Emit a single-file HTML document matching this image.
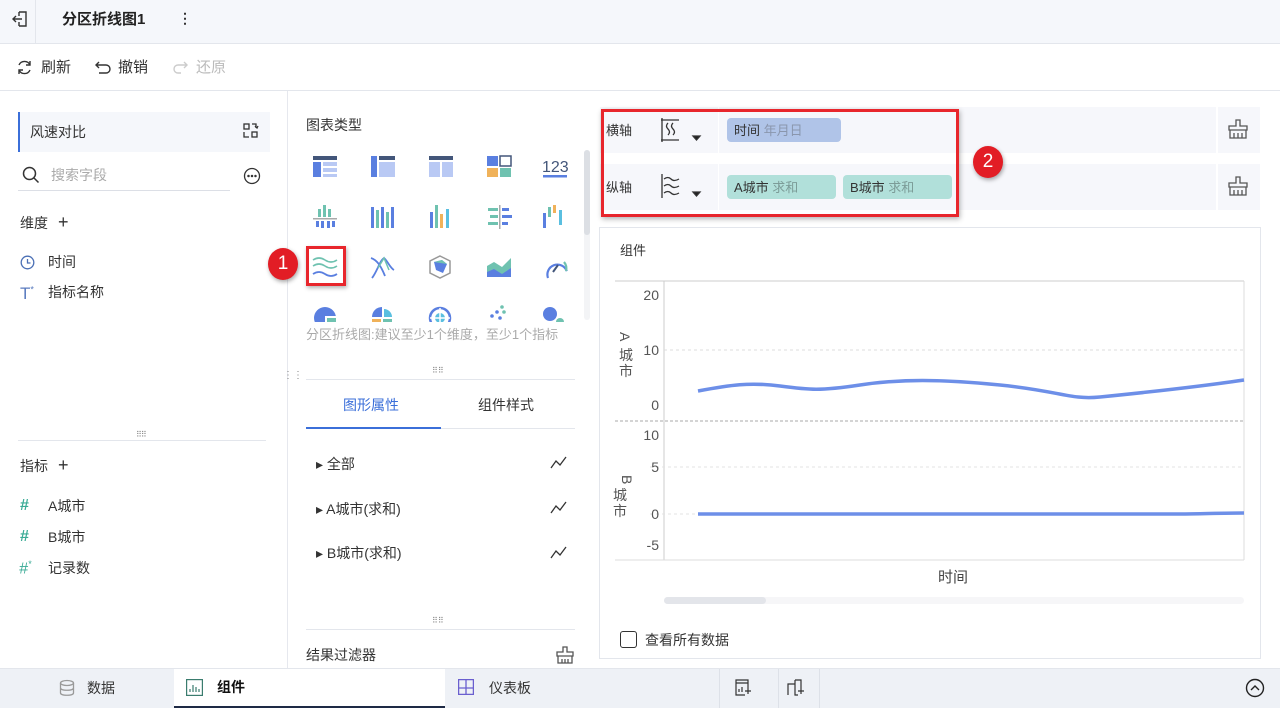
<!DOCTYPE html>
<html><head><meta charset="utf-8"><style>
*{box-sizing:border-box;margin:0;padding:0}
body{width:1280px;height:708px;overflow:hidden;position:relative;background:#fff;font-family:"Liberation Sans","Noto Sans CJK SC",sans-serif;font-size:14px;color:#333}
.a{position:absolute}
.t{position:absolute;white-space:nowrap;line-height:1}
</style></head><body>
<!-- top bar -->
<div class="a" style="left:0;top:0;width:1280px;height:44px;background:#f5f7fb;border-bottom:1px solid #e3e6ec"></div>
<div class="a" style="left:35px;top:0;width:1px;height:44px;background:#e3e6ec"></div>
<svg class="a" style="left:11px;top:10px" width="18" height="18" viewBox="0 0 18 18" fill="none" stroke="#333" stroke-width="1.4"><path d="M8 2h7v14H8M8 6v-4M8 16v-4M2 9h9M5 6L2 9l3 3"/></svg>
<div class="t" style="left:62px;top:12px;font-size:15px;font-weight:bold;color:#222">分区折线图1</div>
<div class="t" style="left:178px;top:11px;font-size:14px;font-weight:bold">⋮</div>
<!-- toolbar -->
<div class="a" style="left:0;top:90px;width:1280px;height:1px;background:#e3e6ec"></div>
<svg class="a" style="left:16px;top:59px" width="17" height="17" viewBox="0 0 17 17" fill="none" stroke="#333" stroke-width="1.4"><path d="M14 6A6 6 0 0 0 3 6M3 11a6 6 0 0 0 11 0M14 2v4h-4M3 15v-4h4"/></svg>
<div class="t" style="left:41px;top:60px;font-size:15px">刷新</div>
<svg class="a" style="left:95px;top:59px" width="17" height="17" viewBox="0 0 17 17" fill="none" stroke="#333" stroke-width="1.4"><path d="M4 3L1 6l3 3M1 6h10a4 4 0 0 1 0 8H4"/></svg>
<div class="t" style="left:118px;top:60px;font-size:15px">撤销</div>
<svg class="a" style="left:172px;top:59px" width="17" height="17" viewBox="0 0 17 17" fill="none" stroke="#ccc" stroke-width="1.4"><path d="M12 3l3 3-3 3M15 6H6a4 4 0 0 0 0 8h3"/></svg>
<div class="t" style="left:196px;top:60px;font-size:15px;color:#bbb">还原</div>
<!-- left panel -->
<div class="a" style="left:287px;top:91px;width:1px;height:577px;background:#e6e8ee"></div>
<div class="a" style="left:18px;top:112px;width:252px;height:40px;background:#f5f7fb;border-left:2px solid #3b6fd9"></div>
<div class="t" style="left:30px;top:125px">风速对比</div>
<svg class="a" style="left:243px;top:123px" width="16" height="16" viewBox="0 0 16 16" fill="none" stroke="#333" stroke-width="1.3"><rect x="1" y="1" width="5" height="5"/><rect x="9" y="9" width="5" height="5"/><path d="M1 9v5h5M9 1h4v4M12 3l2 2 1-2"/></svg>
<svg class="a" style="left:22px;top:166px" width="18" height="18" viewBox="0 0 18 18" fill="none" stroke="#333" stroke-width="1.5"><circle cx="7.5" cy="7.5" r="6"/><path d="M12 12l4.5 4.5"/></svg>
<div class="t" style="left:51px;top:168px;color:#aaa">搜索字段</div>
<div class="a" style="left:18px;top:190px;width:212px;height:1px;background:#dcdfe6"></div>
<svg class="a" style="left:243px;top:167px" width="18" height="18" viewBox="0 0 18 18" fill="none" stroke="#333" stroke-width="1.3"><circle cx="9" cy="9" r="7.5"/><circle cx="5.5" cy="9" r=".6" fill="#333"/><circle cx="9" cy="9" r=".6" fill="#333"/><circle cx="12.5" cy="9" r=".6" fill="#333"/></svg>
<div class="t" style="left:20px;top:216px">维度</div>
<div class="t" style="left:58px;top:213px;font-size:18px">+</div>
<svg class="a" style="left:20px;top:255px" width="15" height="15" viewBox="0 0 15 15" fill="none" stroke="#4a6fb5" stroke-width="1.3"><circle cx="7.5" cy="7.5" r="6.3"/><path d="M7.5 4v4h3"/></svg>
<div class="t" style="left:48px;top:255px">时间</div>
<div class="t" style="left:20px;top:285px;color:#5a7bbf;font-size:17px">T<sup style="font-size:9px">*</sup></div>
<div class="t" style="left:48px;top:285px">指标名称</div>
<div class="a" style="left:18px;top:440px;width:248px;height:1px;background:#e3e6ec"></div>
<div class="t" style="left:136px;top:431px;font-size:8px;color:#888;letter-spacing:-1px">⠿⠿</div>
<div class="t" style="left:20px;top:459px">指标</div>
<div class="t" style="left:58px;top:456px;font-size:18px">+</div>
<div class="t" style="left:20px;top:498px;color:#3aab96;font-weight:bold;font-size:16px">#</div>
<div class="t" style="left:48px;top:499px">A城市</div>
<div class="t" style="left:20px;top:529px;color:#3aab96;font-weight:bold;font-size:16px">#</div>
<div class="t" style="left:48px;top:530px">B城市</div>
<div class="t" style="left:19px;top:560px;color:#3aab96;font-style:italic;font-size:16px">#<sup style="font-size:9px">*</sup></div>
<div class="t" style="left:48px;top:561px">记录数</div>
<div class="t" style="left:283px;top:371px;font-size:10px;color:#888">⋮⋮</div>
<!-- middle panel -->
<div class="t" style="left:306px;top:118px">图表类型</div>
<div class="a" style="left:584px;top:150px;width:6px;height:170px;background:#f3f4f6;border-radius:3px"></div>
<div class="a" style="left:584px;top:150px;width:6px;height:85px;background:#dcdfe4;border-radius:3px"></div>
<svg class="a" style="left:300px;top:150px" width="280" height="180" viewBox="300 150 280 180">
<rect x="313" y="156" width="24" height="4" fill="#43567a"/><rect x="313" y="162" width="8" height="15" fill="#5a7fe0"/><rect x="323" y="162" width="14" height="4" fill="#b9c9f4"/><rect x="323" y="168" width="14" height="4" fill="#b9c9f4"/><rect x="323" y="174" width="14" height="3" fill="#b9c9f4"/>
<rect x="371" y="156" width="6" height="21" fill="#5a7fe0"/><rect x="379" y="156" width="16" height="4" fill="#43567a"/><rect x="379" y="162" width="16" height="15" fill="#b9c9f4"/>
<rect x="429" y="156" width="24" height="4" fill="#43567a"/><rect x="429" y="162" width="11" height="15" fill="#b9c9f4"/><rect x="442" y="162" width="11" height="15" fill="#b9c9f4"/>
<rect x="487" y="156" width="11" height="10" fill="#5a7fe0"/><rect x="500" y="156" width="11" height="10" fill="none" stroke="#43567a" stroke-width="1.5"/><rect x="487" y="168" width="11" height="9" fill="#f0b25a"/><rect x="500" y="168" width="11" height="9" fill="#6fc2b0"/>
<text x="542" y="172" font-size="16" fill="#43567a" font-family="Liberation Sans">123</text><rect x="543" y="175" width="24" height="2.5" fill="#5a7fe0"/>
<rect x="318" y="209" width="3" height="8" fill="#6fc2b0"/><rect x="323" y="205" width="3" height="12" fill="#6fc2b0"/><rect x="328" y="209" width="3" height="8" fill="#6fc2b0"/><rect x="313" y="218" width="24" height="1.5" fill="#aaa"/><rect x="316" y="221" width="3" height="6" fill="#5a7fe0"/><rect x="321" y="221" width="3" height="7" fill="#5a7fe0"/><rect x="327" y="221" width="3" height="7" fill="#5a7fe0"/><rect x="332" y="221" width="3" height="6" fill="#5a7fe0"/>
<g fill="#5a7fe0"><rect x="371" y="207" width="3" height="21"/><rect x="376" y="210" width="3" height="18" fill="#6fc2b0"/><rect x="381" y="207" width="3" height="21"/><rect x="386" y="212" width="3" height="16" fill="#6fc2b0"/><rect x="391" y="207" width="3" height="21"/></g>
<rect x="430" y="212" width="3" height="16" fill="#5a7fe0"/><rect x="435" y="205" width="3" height="23" fill="#6fc2b0"/><rect x="440" y="214" width="3" height="14" fill="#f0b25a"/><rect x="446" y="209" width="3" height="19" fill="#5abfe0"/>
<rect x="499" y="205" width="1.5" height="24" fill="#aaa"/><rect x="488" y="208" width="10" height="3" fill="#6fc2b0"/><rect x="502" y="208" width="7" height="3" fill="#5a7fe0"/><rect x="490" y="215" width="8" height="3" fill="#6fc2b0"/><rect x="502" y="215" width="10" height="3" fill="#5a7fe0"/><rect x="488" y="222" width="10" height="3" fill="#6fc2b0"/><rect x="502" y="222" width="6" height="3" fill="#5a7fe0"/>
<rect x="543" y="213" width="3" height="15" fill="#5a7fe0"/><rect x="548" y="207" width="3" height="10" fill="#6fc2b0"/><rect x="553" y="205" width="3" height="8" fill="#f0b25a"/><rect x="559" y="210" width="3" height="15" fill="#5abfe0"/>
<path d="M313 260q6-4 12 0t12 0M313 266q6-4 12 0t12 0" stroke="#6fc2b0" stroke-width="1.6" fill="none"/><path d="M313 274q6-4 12 0t12 0" stroke="#5a7fe0" stroke-width="1.8" fill="none"/>
<path d="M371 258c6 2 10 8 14 18M372 278c5-6 8-18 12-20 3 2 6 10 10 12" stroke="#5a7fe0" stroke-width="1.8" fill="none"/><path d="M378 268l6-10 5 12" stroke="#6fc2b0" stroke-width="1.5" fill="none"/>
<path d="M440 256l10 5v12l-10 5-10-5v-12z" fill="none" stroke="#999" stroke-width="1.5"/><path d="M434 262l8-2 5 4-4 9-7-3z" fill="#5a7fe0"/><path d="M434 262l8-2 5 4" fill="#6fc2b0"/>
<path d="M487 266l7-4 8 5 9-9v19h-24z" fill="#6fc2b0"/><path d="M487 272l7-3 8 5 9-6v9h-24z" fill="#5a7fe0"/>
<path d="M545 275a10 10 0 1 1 20 0" fill="none" stroke="#5a7fe0" stroke-width="2.2" transform="rotate(-20 555 268)"/><path d="M553 272l5-7" stroke="#43567a" stroke-width="2"/><path d="M564 262a10 10 0 0 1 2 9" stroke="#6fc2b0" stroke-width="2.2" fill="none"/>
<circle cx="325" cy="318" r="11" fill="#5a7fe0"/><rect x="325" y="316" width="12" height="14" fill="#fff"/><rect x="327" y="318" width="9" height="6" fill="#6fc2b0"/>
<path d="M382 307a10 10 0 0 0-10 10h10z" fill="#5a7fe0"/><path d="M384 309a8 8 0 0 1 8 8h-8z" fill="#5abfe0"/><rect x="372" y="319" width="9" height="5" fill="#f0b25a"/><rect x="383" y="319" width="9" height="5" fill="#6fc2b0"/>
<circle cx="440" cy="318" r="10" fill="none" stroke="#5a7fe0" stroke-width="2.5"/><circle cx="440" cy="318" r="5" fill="#5abfe0"/><path d="M440 308v20M430 318h20" stroke="#fff" stroke-width="1.5"/>
<g fill="#5a7fe0"><circle cx="502" cy="307" r="1.8" fill="#6fc2b0"/><circle cx="497" cy="312" r="1.8"/><circle cx="492" cy="316" r="1.8"/><circle cx="500" cy="318" r="1.8"/><circle cx="504" cy="312" r="1.8" fill="#6fc2b0"/></g>
<circle cx="550" cy="314" r="7" fill="#5a7fe0"/><circle cx="560" cy="322" r="4" fill="#6fc2b0"/>
</svg>
<div class="a" style="left:306px;top:246px;width:40px;height:40px;border:3px solid #e8262c;box-shadow:1px 2px 4px rgba(0,0,0,.3)"></div>
<div class="a" style="left:268px;top:248px;width:30px;height:32px;border-radius:50%;background:#e21d25;box-shadow:1px 2px 4px rgba(0,0,0,.35);color:#fff;font-size:19px;text-align:center;line-height:32px">1</div>
<div class="a" style="left:300px;top:322px;width:280px;height:8px;background:#fff"></div>
<div class="t" style="left:306px;top:325px;font-size:13px;color:#aaa;line-height:19px;white-space:normal;width:263px">分区折线图:建议至少1个维度，至少1个指标</div>
<div class="t" style="left:432px;top:367px;font-size:8px;color:#888">⠿⠿</div>
<div class="a" style="left:306px;top:379px;width:269px;height:1px;background:#e3e6ec"></div>
<div class="t" style="left:343px;top:398px;color:#3b6fd9">图形属性</div>
<div class="t" style="left:478px;top:398px">组件样式</div>
<div class="a" style="left:306px;top:428px;width:269px;height:1px;background:#e3e6ec"></div>
<div class="a" style="left:306px;top:427px;width:135px;height:2px;background:#3b6fd9"></div>
<div class="t" style="left:316px;top:457px">▸ 全部</div>
<div class="t" style="left:316px;top:502px">▸ A城市(求和)</div>
<div class="t" style="left:316px;top:546px">▸ B城市(求和)</div>
<svg class="a" style="left:550px;top:455px" width="18" height="110" fill="none" stroke="#333" stroke-width="1.3"><path d="M1 13l5-7 4 4 6-8"/><path d="M1 58l5-7 4 4 6-8"/><path d="M1 103l5-7 4 4 6-8"/></svg>
<div class="t" style="left:432px;top:617px;font-size:8px;color:#888">⠿⠿</div>
<div class="a" style="left:306px;top:629px;width:269px;height:1px;background:#e3e6ec"></div>
<div class="t" style="left:306px;top:648px">结果过滤器</div>
<svg class="a" style="left:556px;top:646px" width="18" height="18" fill="none" stroke="#555" stroke-width="1.3"><path d="M7 1h4v5h6v4H1V6h6zM2 10v7h14v-7M6 13v4M9 13v4M12 13v4"/></svg>
<!-- right axis area -->
<div class="a" style="left:600px;top:107px;width:660px;height:46px;background:#f6f7fb"></div>
<div class="a" style="left:600px;top:164px;width:660px;height:46px;background:#f6f7fb"></div>
<div class="a" style="left:718px;top:107px;width:1px;height:46px;background:#fff"></div>
<div class="a" style="left:718px;top:164px;width:1px;height:46px;background:#fff"></div>
<div class="a" style="left:1216px;top:107px;width:2px;height:46px;background:#fff"></div>
<div class="a" style="left:1216px;top:164px;width:2px;height:46px;background:#fff"></div>
<div class="t" style="left:606px;top:124px;font-size:13px">横轴</div>
<div class="t" style="left:606px;top:181px;font-size:13px">纵轴</div>
<svg class="a" style="left:660px;top:117px" width="44" height="28" fill="none" stroke="#333" stroke-width="1.3"><path d="M2 1v24M1 3h18M1 23h18M8 6q-3 3 0 6t0 6M13 6q-3 3 0 6t0 6"/><path d="M33 19h7l-3.5 4z" fill="#222"/></svg>
<svg class="a" style="left:660px;top:173px" width="44" height="28" fill="none" stroke="#333" stroke-width="1.3"><path d="M2 1v24M4 6q4-3 7 0t8 0M4 13q4-3 7 0t8 0M4 20q4-3 7 0t8 0"/><path d="M33 19h7l-3.5 4z" fill="#222"/></svg>
<div class="a" style="left:727px;top:118px;width:114px;height:24px;background:#b0c4e8;border-radius:4px"></div>
<div class="t" style="left:734px;top:124px;font-size:13px">时间 <span style="color:#8a96ad">年月日</span></div>
<div class="a" style="left:727px;top:175px;width:109px;height:24px;background:#b1e0da;border-radius:4px"></div>
<div class="t" style="left:734px;top:181px;font-size:13px">A城市 <span style="color:#7c9c98">求和</span></div>
<div class="a" style="left:843px;top:175px;width:109px;height:24px;background:#b1e0da;border-radius:4px"></div>
<div class="t" style="left:850px;top:181px;font-size:13px">B城市 <span style="color:#7c9c98">求和</span></div>
<svg class="a" style="left:1228px;top:119px" width="20" height="20" fill="none" stroke="#555" stroke-width="1.3"><path d="M8 1h4v6h7v4H1V7h7zM2 11v8h16v-8M6 14v5M10 14v5M14 14v5"/></svg>
<svg class="a" style="left:1228px;top:176px" width="20" height="20" fill="none" stroke="#555" stroke-width="1.3"><path d="M8 1h4v6h7v4H1V7h7zM2 11v8h16v-8M6 14v5M10 14v5M14 14v5"/></svg>
<div class="a" style="left:601px;top:109px;width:358px;height:108px;border:3px solid #e8262c;box-shadow:1px 2px 5px rgba(0,0,0,.3)"></div>
<div class="a" style="left:973px;top:146px;width:30px;height:32px;border-radius:50%;background:#e21d25;box-shadow:1px 2px 4px rgba(0,0,0,.35);color:#fff;font-size:19px;text-align:center;line-height:32px">2</div>
<!-- chart panel -->
<div class="a" style="left:599px;top:227px;width:662px;height:432px;border:1px solid #e3e6ec"></div>
<div class="t" style="left:620px;top:244px;font-size:13px">组件</div>
<svg class="a" style="left:600px;top:270px" width="660" height="340" font-family="Liberation Sans,Noto Sans CJK SC" font-size="14" fill="#555">
<line x1="15" y1="11" x2="644" y2="11" stroke="#ccc"/>
<line x1="64" y1="11" x2="64" y2="290" stroke="#ccc"/>
<line x1="644" y1="11" x2="644" y2="290" stroke="#ddd"/>
<line x1="15" y1="151" x2="644" y2="151" stroke="#aaa" stroke-dasharray="3 2"/>
<line x1="15" y1="290" x2="644" y2="290" stroke="#ddd"/>
<line x1="64" y1="80" x2="644" y2="80" stroke="#ddd" stroke-dasharray="3 3"/>
<line x1="50" y1="197" x2="644" y2="197" stroke="#e3e3e3" stroke-dasharray="3 3"/>
<line x1="50" y1="244" x2="644" y2="244" stroke="#e3e3e3" stroke-dasharray="3 3"/>
<text x="59" y="30" text-anchor="end">20</text><text x="59" y="85" text-anchor="end">10</text><text x="59" y="140" text-anchor="end">0</text>
<text x="59" y="170" text-anchor="end">10</text><text x="59" y="202" text-anchor="end">5</text><text x="59" y="249" text-anchor="end">0</text><text x="59" y="280" text-anchor="end">-5</text>
<text transform="translate(20,62) rotate(90)">A</text><text x="19" y="90">城</text><text x="19" y="106">市</text>
<text transform="translate(22,205) rotate(90)">B</text><text x="13" y="230">城</text><text x="13" y="246">市</text>
<path d="M98 121C130 115 150 112 180 116S220 121 260 115 340 109 400 115 470 130 500 127 590 118 644 110" stroke="#6d8fe8" stroke-width="3.5" fill="none"/>
<path d="M98 244H580C600 244 620 243 644 243" stroke="#6d8fe8" stroke-width="3.5" fill="none"/>
<text x="338" y="312" font-size="15" fill="#444">时间</text>
<rect x="64" y="327" width="580" height="7" rx="3.5" fill="#f6f6f8"/><rect x="64" y="327" width="102" height="7" rx="3.5" fill="#e3e5ea"/>
</svg>
<div class="a" style="left:620px;top:631px;width:17px;height:17px;border:1.5px solid #333;border-radius:3px"></div>
<div class="t" style="left:645px;top:633px;font-size:14px">查看所有数据</div>
<!-- bottom bar -->
<div class="a" style="left:0;top:668px;width:1280px;height:40px;background:#eef1f6;border-top:1px solid #e3e6ec"></div>
<div class="a" style="left:174px;top:669px;width:271px;height:39px;background:#fff;border-bottom:2px solid #1e2a45"></div>
<svg class="a" style="left:59px;top:679px" width="16" height="18" fill="none" stroke="#999" stroke-width="1.3"><ellipse cx="8" cy="4" rx="6.5" ry="2.5"/><path d="M1.5 4v10c0 3 13 3 13 0V4M1.5 9c0 3 13 3 13 0"/></svg>
<div class="t" style="left:87px;top:681px">数据</div>
<svg class="a" style="left:186px;top:679px" width="17" height="17" fill="none" stroke="#3a7c6e" stroke-width="1.2"><rect x=".6" y=".6" width="15.8" height="15.8"/><path d="M4 13v-3M7 13V6M10 13V8M13 13V10"/></svg>
<div class="t" style="left:217px;top:680px;font-weight:bold;color:#111">组件</div>
<svg class="a" style="left:458px;top:679px" width="16" height="16" fill="none" stroke="#6a5fcf" stroke-width="1.3"><rect x=".6" y=".6" width="14.8" height="14.8"/><path d="M8 .6v14.8M.6 9h14.8"/></svg>
<div class="t" style="left:489px;top:681px">仪表板</div>
<div class="a" style="left:719px;top:669px;width:1px;height:39px;background:#dde1e8"></div>
<div class="a" style="left:778px;top:669px;width:1px;height:39px;background:#dde1e8"></div>
<div class="a" style="left:819px;top:669px;width:1px;height:39px;background:#dde1e8"></div>
<svg class="a" style="left:735px;top:679px" width="18" height="18" fill="none" stroke="#333" stroke-width="1.2"><path d="M13 10V1H1v15h9M1 4h12M4 13v-3M7 13V8M10 12h6M13 9v6"/></svg>
<svg class="a" style="left:787px;top:679px" width="18" height="18" fill="none" stroke="#333" stroke-width="1.2"><path d="M1 16V5h7v11h3M8 1h6v8M8 1v4M11 12h6M14 9v6"/></svg>
<svg class="a" style="left:1245px;top:678px" width="20" height="20" fill="none" stroke="#222" stroke-width="1.4"><circle cx="10" cy="10" r="8.5"/><path d="M6 12l4-4 4 4"/></svg>
</body></html>
